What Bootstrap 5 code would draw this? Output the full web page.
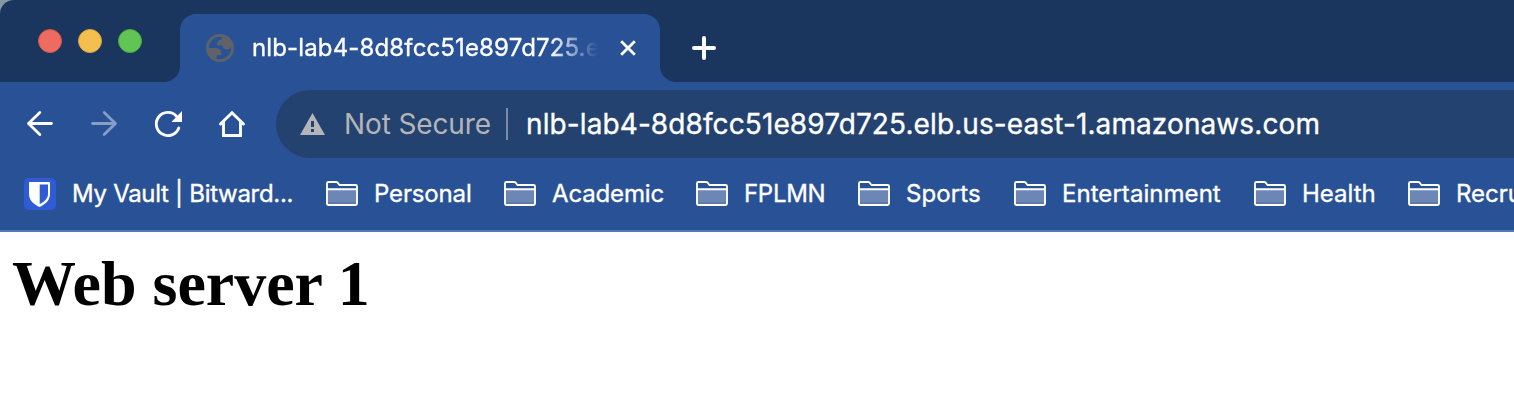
<!DOCTYPE html>
<html lang="en">
<head>
<meta charset="utf-8">
<meta name="viewport" content="width=device-width, initial-scale=1">
<title>Web server 1</title>
<link href="https://cdn.jsdelivr.net/npm/bootstrap@5.3.0/dist/css/bootstrap.min.css" rel="stylesheet">
<style>
  body { font-family: Inter, "Liberation Sans", sans-serif; background: #fff; }
  svg { display: block; flex: none; }
  .browser-corner { background: #8796a1; }
  .tab-strip { height: 82px; background: #1a355e; border-top-left-radius: 14px; padding-left: 38px; }
  .lights { width: 142px; gap: 16px; padding-top: 29px; }
  .light { width: 24px; height: 24px; border-radius: 50%; border: 1px solid; }
  .light-red { background: #ed6b60; border-color: #d3554b; }
  .light-yellow { background: #f5bf4f; border-color: #d9a33c; }
  .light-green { background: #61c555; border-color: #4ba93f; }
  .browser-tab { width: 480px; height: 68px; margin-top: 14px; background: #295296; border-radius: 16px 16px 0 0; padding-left: 26px; }
  .browser-tab::before, .browser-tab::after { content: ""; position: absolute; bottom: 0; width: 16px; height: 16px; }
  .browser-tab::before { left: -16px; background: radial-gradient(circle at 0 0, #1a355e 15.5px, #295296 16.5px); }
  .browser-tab::after { right: -16px; background: radial-gradient(circle at 100% 0, #1a355e 15.5px, #295296 16.5px); }
  .tab-title, .address, .bookmarks { -webkit-text-stroke: .35px #fff; }
  .tab-title { width: 346px; margin-left: 18px; font-size: 24px; line-height: 36px; color: #fff; letter-spacing: .14px;
    -webkit-mask-image: linear-gradient(90deg, #000 298px, transparent 346px); mask-image: linear-gradient(90deg, #000 298px, transparent 346px); }
  .tab-close { margin-left: 22px; }
  .tab-add { margin: 36px 0 0 32px; }
  .toolbar { height: 84px; background: #295296; padding: 8px 0 8px 24px; }
  .nav-icons { width: 252px; gap: 32px; }
  .omnibox { height: 68px; background: #24426f; border-radius: 34px 0 0 34px; padding-left: 24px; font-size: 28px; line-height: 40px; }
  .insecure { margin-left: 19px; width: 162px; color: #b3b5b8; letter-spacing: -.12px; }
  .divider { width: 2px; height: 32px; background: #7b8cab; }
  .address { margin-left: 18px; color: #fff; letter-spacing: .1px; }
  .bookmarks { height: 66px; background: #295296; border-bottom: 2px solid #5279b2; padding: 0 0 8px 24px; font-size: 24px; line-height: 36px; color: #fff; }
  .bookmark { flex: none; gap: 16px; }
  .w-vault { width: 302px; letter-spacing: -.3px; } .w-personal { width: 178px; letter-spacing: -.15px; }
  .w-academic { width: 192px; letter-spacing: -.15px; } .w-fplmn { width: 162px; letter-spacing: -.3px; }
  .w-sports { width: 156px; letter-spacing: .1px; } .w-ent { width: 240px; letter-spacing: .05px; } .w-health { width: 154px; }
  .page h1 { font-family: "Liberation Serif", serif; font-weight: 700; font-size: 64px; line-height: 74px; color: #000; margin: 15px 0 0 12px; }
</style>
</head>
<body class="overflow-hidden">
<svg width="0" height="0" class="position-absolute" aria-hidden="true">
  <symbol id="folder" viewBox="0 0 32 32">
    <path d="M2 12h28v15H2z" fill="#6c87b6"/><path d="M2 24h28v2H2z" fill="#617aa5"/>
    <path d="M1 25.500V5.500Q1 4 2.500 4H10q1 0 1.600.7L13.500 7H29.500Q31 7 31 8.500V25.500Q31 27 29.500 27H2.500Q1 27 1 25.500M1 11.200H31" fill="none" stroke="#fff" stroke-width="1.900"/>
  </symbol>
</svg>
<header>
  <div class="browser-corner">
    <div class="tab-strip d-flex align-items-start">
      <div class="lights d-flex">
        <span class="light light-red"></span><span class="light light-yellow"></span><span class="light light-green"></span>
      </div>
      <div class="browser-tab position-relative d-flex align-items-center">
        <svg width="28" height="28" viewBox="2 2 20 20"><path fill="#5f6368" fill-rule="evenodd" d="M12 2C6.480 2 2 6.480 2 12s4.480 10 10 10 10-4.480 10-10S17.520 2 12 2zM4 12h4.400c3.407.022 4.922 1.730 4.543 5.127H9.488v2.470a8.004 8.004 0 0 0 10.498-8.083C19.327 12.504 18.332 13 17 13c-2.137 0-3.206-.916-3.206-2.750h-3.748c-.274-2.728.683-4.092 2.870-4.092 0-.975.327-1.597.811-1.970A8.004 8.004 0 0 0 4 12z"/></svg>
        <div class="tab-title text-nowrap overflow-hidden">nlb-lab4-8d8fcc51e897d725.e</div>
        <svg class="tab-close" width="16" height="16" viewBox="0 0 16 16"><path d="M1.200 1.200 14.800 14.800M14.800 1.200 1.200 14.800" stroke="#fff" stroke-width="2.800"/></svg>
      </div>
      <svg class="tab-add" width="24" height="24" viewBox="0 0 24 24"><path d="M12 2v20M2 12h20" stroke="#fff" stroke-width="4" stroke-linecap="round"/></svg>
    </div>
  </div>
  <nav class="toolbar d-flex">
    <div class="nav-icons d-flex align-items-center flex-shrink-0">
      <svg width="32" height="32" viewBox="0 0 32 32" fill="none" stroke="#fff" stroke-width="2.800" stroke-linecap="round" stroke-linejoin="round"><path d="M27.500 15.500H4.500M15.800 4.500 4.500 15.500 15.800 26.500"/></svg>
      <svg width="32" height="32" viewBox="0 0 32 32" fill="none" stroke="#869dc5" stroke-width="2.800" stroke-linecap="round" stroke-linejoin="round"><path d="M4.500 15.500H27.500M16.200 4.500 27.500 15.500 16.200 26.500"/></svg>
      <svg width="32" height="32" viewBox="0 0 32 32"><path d="M26.800 20A11.600 11.600 0 1 1 24.500 8.200" fill="none" stroke="#fff" stroke-width="2.900" stroke-linecap="round"/><path d="M30 3V14H19.400z" fill="#fff"/></svg>
      <svg width="32" height="32" viewBox="0 0 32 32" fill="none" stroke="#fff" stroke-width="2.900" stroke-linecap="round"><path d="M4.500 16 16 4.700 27.500 16M7.500 14V27.500H24.500V14"/></svg>
    </div>
    <div class="omnibox d-flex align-items-center flex-grow-1">
      <svg width="25" height="22" viewBox="0 0 25 22"><path d="M12.500 0 25 22H0z" fill="#b3b5b8"/><path d="M11 8h3v6h-3zM11 16h3v3h-3z" fill="#24426f"/></svg>
      <span class="insecure text-nowrap">Not Secure</span>
      <span class="divider"></span>
      <span class="address text-nowrap">nlb-lab4-8d8fcc51e897d725.elb.us-east-1.amazonaws.com</span>
    </div>
  </nav>
  <div class="bookmarks d-flex align-items-center text-nowrap overflow-hidden">
    <div class="bookmark w-vault d-flex align-items-center">
      <svg width="32" height="32" viewBox="0 0 32 32"><rect width="32" height="32" rx="5" fill="#2f5bd5"/><path d="M5 4H26V16C26 23 20 27 15.500 29 11 27 5 23 5 16z" fill="#fff"/><path d="M15.700 6.500H24V16C24 20.500 20 24 15.700 26z" fill="#2f5bd5"/></svg>
      <span>My Vault | Bitward...</span>
    </div>
    <div class="bookmark w-personal d-flex align-items-center"><svg width="32" height="32"><use href="#folder"/></svg><span>Personal</span></div>
    <div class="bookmark w-academic d-flex align-items-center"><svg width="32" height="32"><use href="#folder"/></svg><span>Academic</span></div>
    <div class="bookmark w-fplmn d-flex align-items-center"><svg width="32" height="32"><use href="#folder"/></svg><span>FPLMN</span></div>
    <div class="bookmark w-sports d-flex align-items-center"><svg width="32" height="32"><use href="#folder"/></svg><span>Sports</span></div>
    <div class="bookmark w-ent d-flex align-items-center"><svg width="32" height="32"><use href="#folder"/></svg><span>Entertainment</span></div>
    <div class="bookmark w-health d-flex align-items-center"><svg width="32" height="32"><use href="#folder"/></svg><span>Health</span></div>
    <div class="bookmark d-flex align-items-center"><svg width="32" height="32"><use href="#folder"/></svg><span>Recru</span></div>
  </div>
</header>
<main class="page"><h1>Web server 1</h1></main>
<script src="https://cdn.jsdelivr.net/npm/bootstrap@5.3.0/dist/js/bootstrap.bundle.min.js"></script>
</body>
</html>
